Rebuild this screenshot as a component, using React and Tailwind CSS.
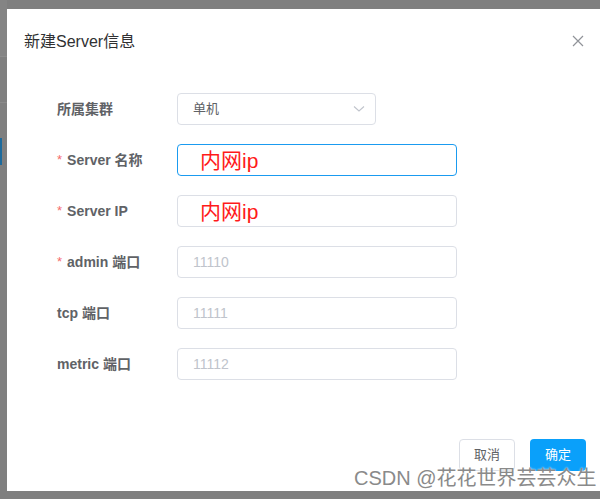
import React from "react";

const font = { fontFamily: '"Liberation Sans","Noto Sans CJK SC",sans-serif' };

function Label({ req, children }) {
  return (
    <div className="w-[120px] shrink-0 flex items-center text-[14px] font-bold text-[#606266]">
      {req && <span className="text-[#f56c6c] mr-[5px] font-normal text-[13px]">*</span>}
      {children}
    </div>
  );
}

function Row({ label, req, children }) {
  return (
    <div className="flex items-center h-[32px]">
      <Label req={req}>{label}</Label>
      {children}
    </div>
  );
}

function Field({ value, placeholder, focus }) {
  return (
    <div
      className={`w-[280px] h-[32px] rounded-[4px] border bg-white flex items-center ${
        focus ? "border-[#1a9bf0]" : "border-[#dcdfe6]"
      } ${value ? "pl-[22px]" : "pl-[15px]"}`}
    >
      {value ? (
        <span className="text-[21px] text-[#ff1a1a] leading-none">{value}</span>
      ) : (
        <span className="text-[14px] text-[#c0c4cc]">{placeholder}</span>
      )}
    </div>
  );
}

export default function App() {
  return (
    <div className="w-[600px] h-[499px] bg-[#7f7f7f] flex overflow-hidden relative" style={font}>
      <div className="w-[7px] shrink-0 flex flex-col">
        <div className="h-[57px] bg-[#848484] border-b border-[#8c8c8c]" />
        <div className="h-[46px] border-b border-[#8a8a8a]" />
        <div className="h-[35px]" />
        <div className="h-[27px] w-[2px] bg-[#1d6a9c]" />
      </div>
      <div className="mt-[9px] w-[593px] h-[482px] bg-white flex flex-col shrink-0">
        <div className="flex items-center justify-between pl-[17px] pr-[14px] pt-[21px] h-[45px]">
          <span className="text-[16px] text-[#303133] leading-[24px]">新建Server信息</span>
          <svg width="12" height="12" viewBox="0 0 12 12" className="mr-[2px] -mt-[2px]">
            <path d="M1 1L11 11M11 1L1 11" stroke="#909399" strokeWidth="1.2" />
          </svg>
        </div>
        <div className="pl-[50px] pt-[39px] flex flex-col gap-[19px]">
          <Row label="所属集群">
            <div className="w-[199px] h-[32px] rounded-[4px] border border-[#dcdfe6] flex items-center justify-between pl-[15px] pr-[10px]">
              <span className="text-[13px] text-[#606266]">单机</span>
              <svg width="12" height="8" viewBox="0 0 12 8">
                <path d="M1 1.5L6 6L11 1.5" stroke="#c0c4cc" strokeWidth="1.1" fill="none" />
              </svg>
            </div>
          </Row>
          <Row label="Server 名称" req>
            <Field value="内网ip" focus />
          </Row>
          <Row label="Server IP" req>
            <Field value="内网ip" />
          </Row>
          <Row label="admin 端口" req>
            <Field placeholder="11110" />
          </Row>
          <Row label="tcp 端口">
            <Field placeholder="11111" />
          </Row>
          <Row label="metric 端口">
            <Field placeholder="11112" />
          </Row>
        </div>
        <div className="flex-1" />
        <div className="flex justify-end gap-[15px] pr-[14px] pb-[20px]">
          <div className="w-[56px] h-[32px] rounded-[4px] border border-[#dcdfe6] flex items-center justify-center text-[13px] text-[#606266]">
            取消
          </div>
          <div className="w-[56px] h-[32px] rounded-[4px] bg-[#0aa0fa] flex items-center justify-center text-[13px] text-white">
            确定
          </div>
        </div>
      </div>
      <div
        className="absolute left-[354px] top-[466px] text-[20px] leading-[24px] text-[#8a8a8a] whitespace-nowrap"
        style={{ textShadow: "0 0 2px #fff" }}
      >
        CSDN @花花世界芸芸众生
      </div>
    </div>
  );
}
